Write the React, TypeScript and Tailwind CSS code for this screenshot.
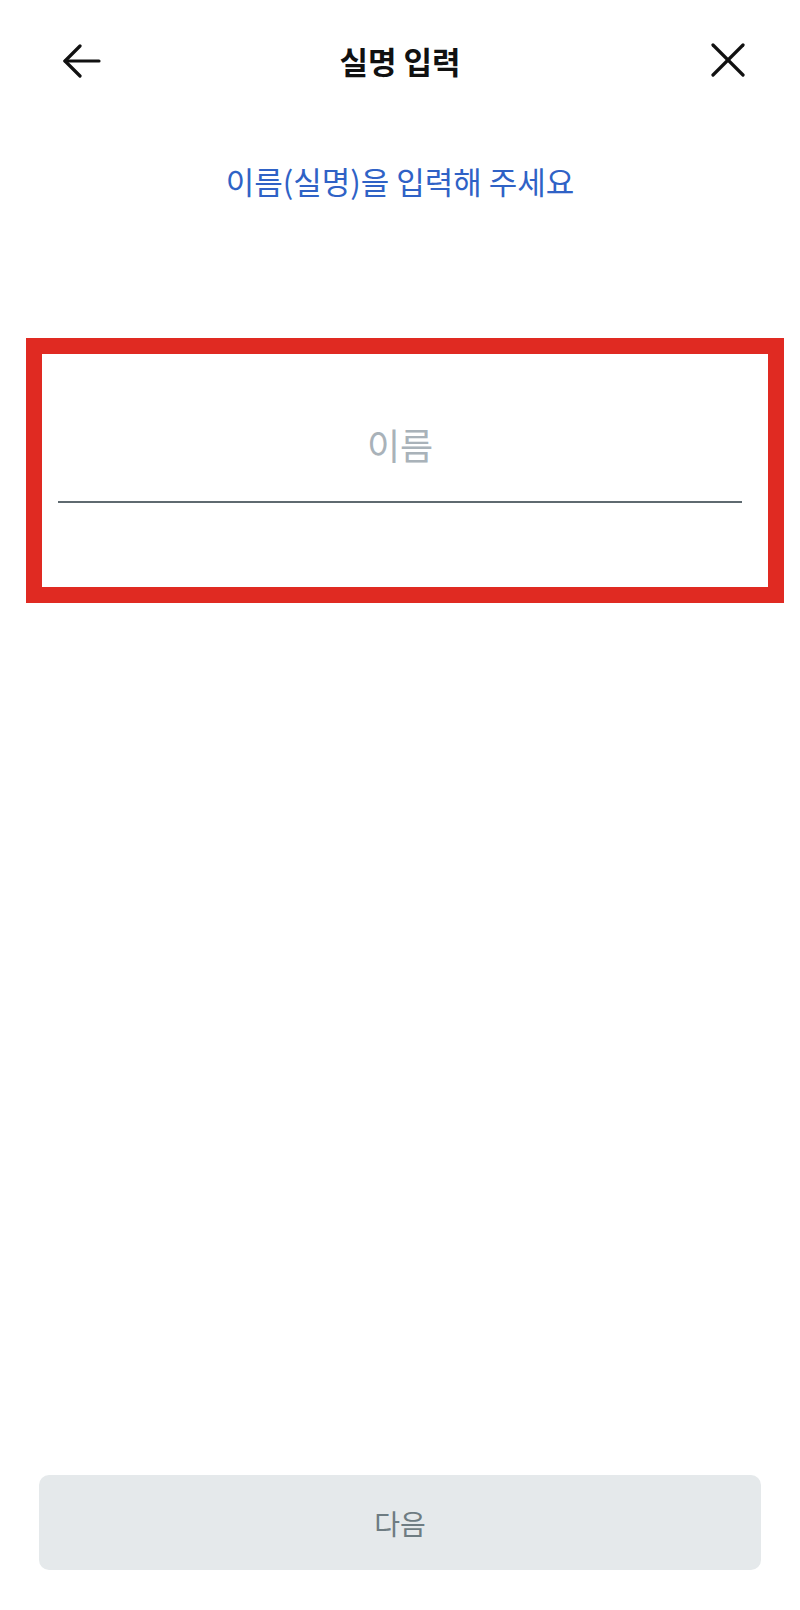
import React from "react";

export default function App() {
  return (
    <div className="flex min-h-[1610px] w-[800px] flex-col bg-white font-['Noto_Sans_CJK_KR','Noto_Sans',sans-serif]">
      <header className="grid h-[122px] grid-cols-3 items-center">
        <div className="flex items-center">
          <svg
            className="ml-[63px]"
            width="38"
            height="34"
            viewBox="0 0 38 34"
            fill="none"
            stroke="#111111"
            strokeWidth="3.2"
            strokeLinecap="round"
            strokeLinejoin="round"
          >
            <path d="M2 17 H36" />
            <path d="M17 2 L2 17 L17 32" />
          </svg>
        </div>
        <h1 className="text-center text-[31px] font-bold leading-[40px] text-[#111111]">실명 입력</h1>
        <div className="flex items-center justify-end">
          <svg
            className="mr-[55px] mb-[2px]"
            width="34"
            height="34"
            viewBox="0 0 34 34"
            fill="none"
            stroke="#111111"
            strokeWidth="3.2"
            strokeLinecap="round"
          >
            <path d="M2 2 L32 32" />
            <path d="M32 2 L2 32" />
          </svg>
        </div>
      </header>

      <p className="mt-[39px] text-center text-[31px] leading-[40px] text-[#2f62c6]">
        이름(실명)을 입력해 주세요
      </p>

      <div className="ml-[26px] mr-[16px] mt-[137px] h-[265px] border-[16px] border-[#e02a22] pl-[16px] pr-[26px] pt-[33px]">
        <input
          type="text"
          placeholder="이름"
          className="block h-[116px] w-full border-b-2 border-[#5f6a70] bg-transparent text-center text-[36px] text-[#222222] outline-none placeholder:text-[#a9b2b9]"
        />
      </div>

      <div className="flex-1" />

      <button
        type="button"
        className="mx-[39px] mb-[40px] flex h-[95px] items-center justify-center rounded-[10px] bg-[#e5e9eb] text-[28px] text-[#6e7c82]"
      >
        다음
      </button>
    </div>
  );
}
